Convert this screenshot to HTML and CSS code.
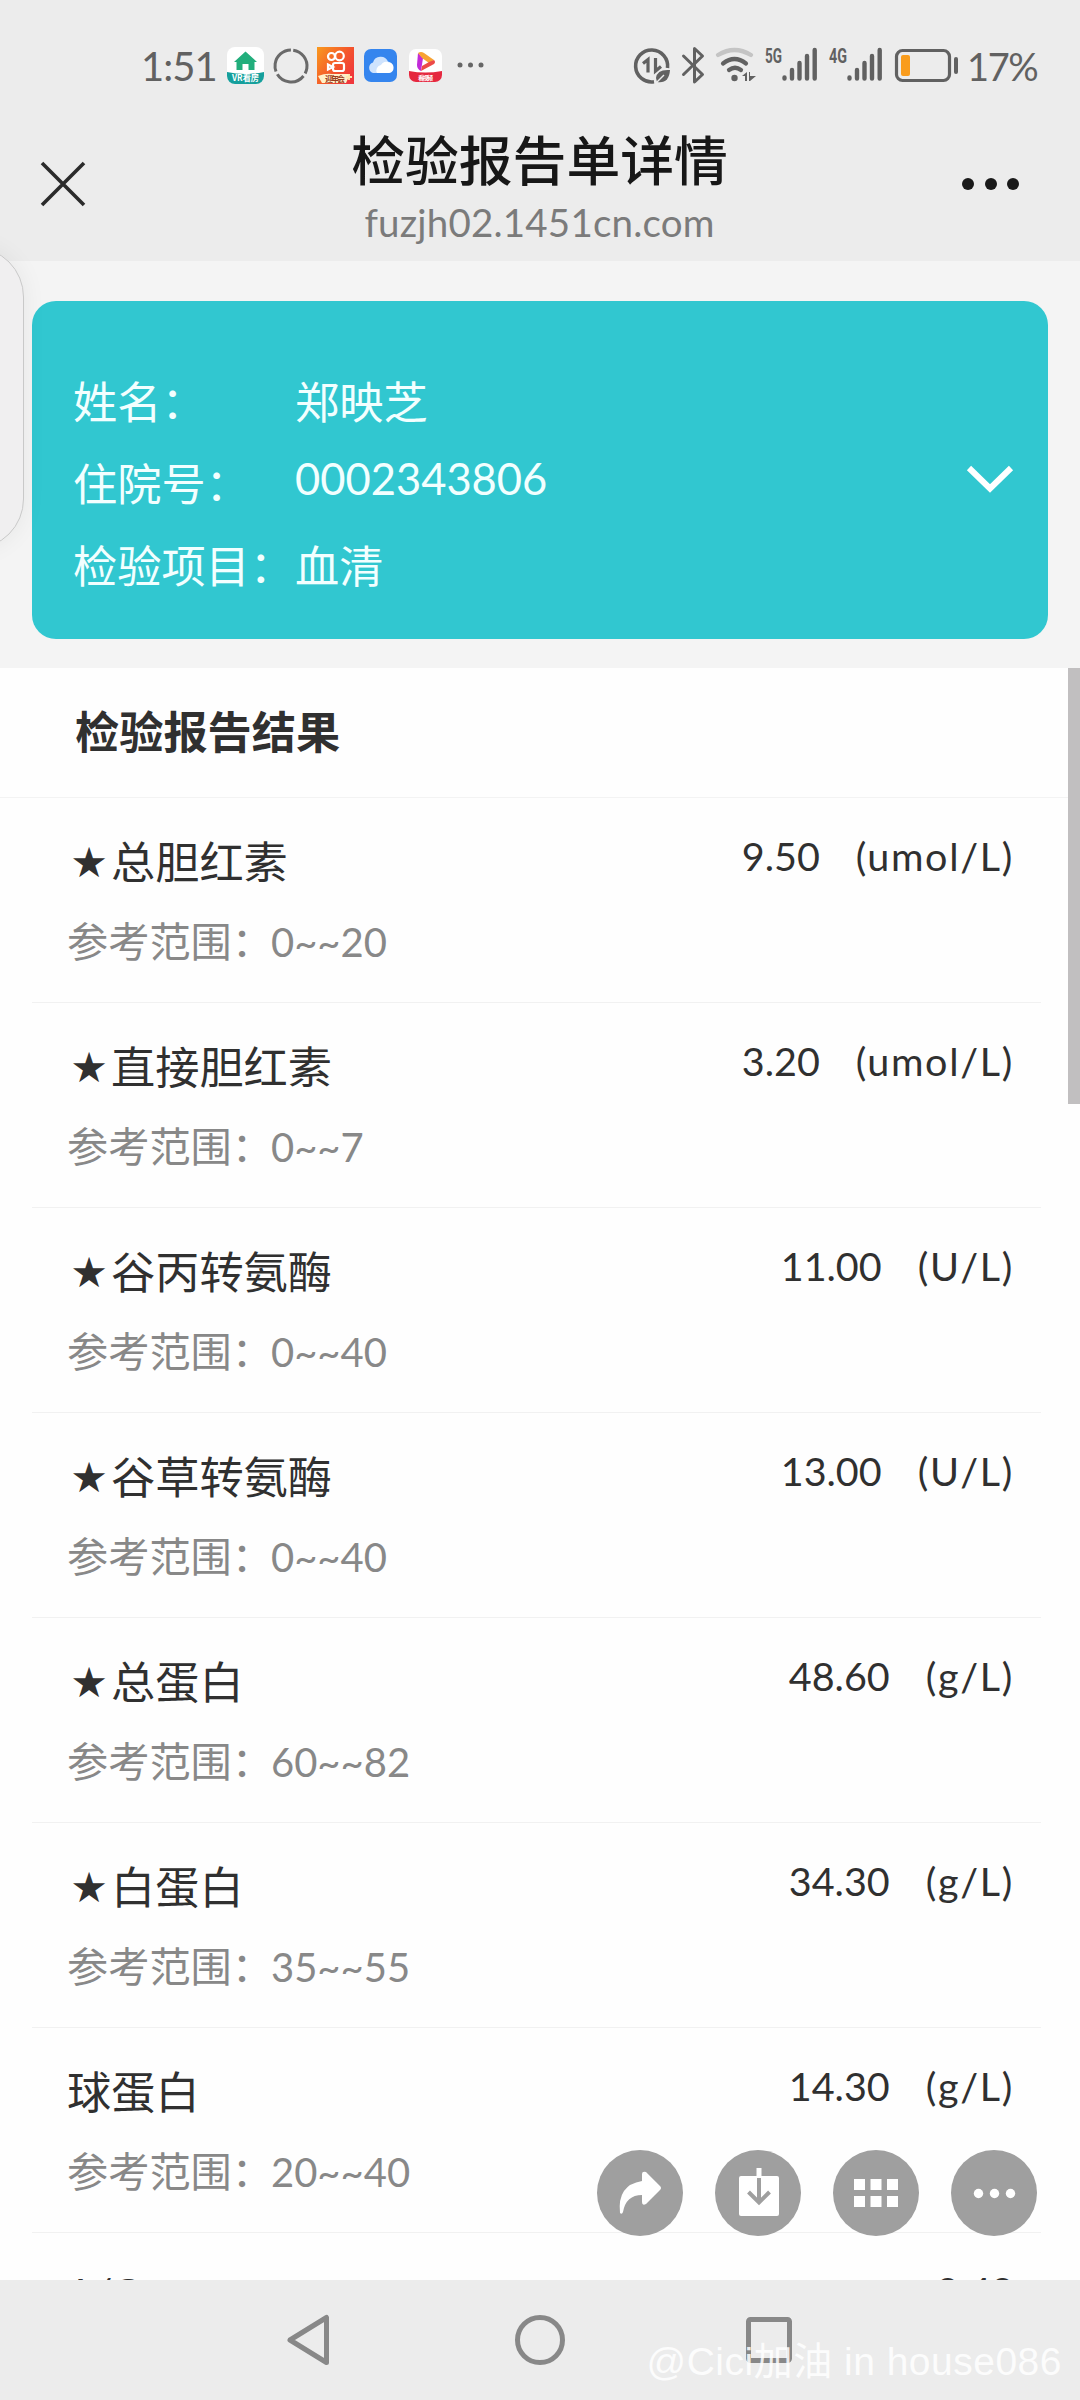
FILE: index.html
```html
<!DOCTYPE html>
<html lang="zh-CN">
<head>
    <meta charset="UTF-8">
    <meta name="viewport" content="width=device-width, initial-scale=1.0">
    <title>检验报告单详情</title>
    <link rel="stylesheet" href="styles.css">
</head>
<body>
    <div class="status-bar">
        <div class="status-left">
            <span class="clock">1:51</span>
            <svg class="app-icons" width="260" height="42" viewBox="225 45 260 42">
                <!-- house app -->
                <clipPath id="house-clip"><rect x="227" y="47" width="37" height="37" rx="8"/></clipPath>
                <g clip-path="url(#house-clip)">
                    <rect x="227" y="47" width="37" height="37" fill="#fff"/>
                    <path d="M227 72q18 4 37 0v12h-37z" fill="#159f9c"/>
                    <path d="M234 62l11.500-10.500L257 62h-2.500v8h-6v-6h-6v6h-6v-8z" fill="#22ae7c"/>
                    <text x="245.500" y="81" class="tiny" textLength="27" lengthAdjust="spacingAndGlyphs">VR看房</text>
                </g>
                <!-- broken ring -->
                <circle cx="291" cy="66" r="16" fill="none" stroke="#6a6a6a" stroke-width="3" stroke-dasharray="30.500 3" transform="rotate(-82 291 66)"/>
                <!-- short video app -->
                <linearGradient id="video-bg" x1="0" y1="0" x2="1" y2="0.700"><stop offset="0" stop-color="#f99a1e"/><stop offset="0.600" stop-color="#f4572b"/><stop offset="1" stop-color="#f0383c"/></linearGradient>
                <rect x="317" y="47" width="37" height="37" fill="url(#video-bg)"/>
                <g fill="none" stroke="#fff" stroke-width="2.200">
                    <circle cx="331.500" cy="56.500" r="3.500"/>
                    <circle cx="339.500" cy="56" r="4.300"/>
                    <rect x="333" y="63" width="11" height="8" rx="2"/>
                    <path d="M333 67l-5-2.500v5z"/>
                </g>
                <path d="M318 76q8-3 14-2h18l-4 9h-24z" fill="#fff0c8"/>
                <text x="335" y="82" class="tiny tiny-brown" textLength="20">迎年会</text>
                <path d="M349 74v6M346 77h6" stroke="#ffe9b0" stroke-width="1.800"/>
                <!-- cloud -->
                <rect x="364" y="49" width="33" height="33" rx="7" fill="#3585ee"/>
                <path d="M373 73a5.500 5.500 0 0 1 0-10.500a8 8 0 0 1 15-1a6 6 0 0 1 1 11.500z" fill="#cfe3fd"/>
                <path d="M377 73a5.500 5.500 0 0 1 4-8a5.500 5.500 0 0 1 8-2.500a5.300 5.300 0 0 1 0 10.500z" fill="#fff"/>
                <!-- player -->
                <clipPath id="player-clip"><rect x="409" y="49" width="33" height="33" rx="7"/></clipPath>
                <g clip-path="url(#player-clip)">
                    <rect x="409" y="49" width="33" height="33" fill="#fff"/>
                    <path d="M409 71q16 3 33 0v11h-33z" fill="#e5283f"/>
                    <path d="M418 53l5 5-2 13q-4-2-4-6z" fill="#c12bd8"/>
                    <path d="M418 53q3-2 6 0l10 7-5 3-7-5z" fill="#f8a233"/>
                    <path d="M434 60q2 2 0 4l-13 7 1-5 7-4z" fill="#ec4a48"/>
                    <text x="425.500" y="79.500" class="tiny tiny-small" textLength="15">看视频</text>
                </g>
                <g fill="#666"><circle cx="460" cy="65" r="2.500"/><circle cx="470.500" cy="65" r="2.500"/><circle cx="481" cy="65" r="2.500"/></g>
            </svg>
        </div>
        <div class="status-right">
            <svg width="326" height="46" viewBox="633 43 326 46">
                <!-- data saver -->
                <path d="M654 81.800A16 16 0 1 1 667.500 68" fill="none" stroke="#616161" stroke-width="3.600"/>
                <path d="M643 63.500l5-4v13M655.500 58v13l5.500-4.500" fill="none" stroke="#616161" stroke-width="3.200"/>
                <path d="M670 70q-13-1-14 8l1 4q12 2 13-12z" fill="#616161"/>
                <path d="M656 83l8-8" stroke="#ececec" stroke-width="1.500"/>
                <!-- bluetooth -->
                <path d="M683.500 56l19 18.500-8 7.500V48.500l8 7.500-19 18.500" fill="none" stroke="#616161" stroke-width="3" stroke-linejoin="round" stroke-linecap="round"/>
                <!-- wifi -->
                <g fill="none" stroke-width="4.200" stroke-linecap="round">
                    <path d="M718 55q16.500-10 33 0" stroke="#c4c4c4"/>
                    <path d="M723 63.500q11.500-9 23 0" stroke="#616161"/>
                    <path d="M729 70q6-4.500 12 0" stroke="#616161"/>
                </g>
                <circle cx="734.500" cy="78" r="3.200" fill="#616161"/>
                <path d="M742 76l5-4v9h-2v-5zM749 72l1 0v4h6l-6 5h-1z" fill="#616161"/>
                <!-- mobile signal -->
                <text x="765" y="62.500" class="net" textLength="17" lengthAdjust="spacingAndGlyphs">5G</text>
                <path d="M784.500 77.500v1M792 70v8.500M799.500 63v15.500M807 56v22.500M814.700 50v28.500" class="bars"/>
                <text x="829" y="62.500" class="net" textLength="18" lengthAdjust="spacingAndGlyphs">4G</text>
                <path d="M849.500 77.500v1M857 70v8.500M864.500 63v15.500M872 56v22.500M879.700 50v28.500" class="bars"/>
                <!-- battery -->
                <rect x="896.500" y="50.500" width="53" height="30" rx="6" fill="none" stroke="#616161" stroke-width="3.200"/>
                <rect x="901" y="55" width="9" height="21" rx="2" fill="#f99c1c"/>
                <rect x="954" y="57" width="4" height="17" rx="2" fill="#616161"/>
            </svg>
            <span class="percent">17%</span>
        </div>
    </div>

    <div class="title-bar">
        <svg width="46" height="46" viewBox="0 0 46 46"><path d="M2 2l42 42M44 2L2 44" stroke="#2b2b2b" stroke-width="3.600"/></svg>
        <div class="title-text">
            <h1>检验报告单详情</h1>
            <p>fuzjh02.1451cn.com</p>
        </div>
        <svg width="58" height="14" viewBox="0 0 58 14" fill="#1a1a1a"><circle cx="6" cy="7" r="6"/><circle cx="29" cy="7" r="6"/><circle cx="51" cy="7" r="6"/></svg>
    </div>

    <div class="page">
        <div class="card">
            <dl class="patient">
                <dt>姓名：</dt><dd>郑映芝</dd>
                <dt>住院号：</dt><dd class="digits">0002343806</dd>
                <dt>检验项目：</dt><dd>血清</dd>
            </dl>
            <svg width="48" height="30" viewBox="0 0 48 30"><path d="M3 3l21 20.500L45 3" fill="none" stroke="#fff" stroke-width="6"/></svg>
        </div>

        <div class="results">
            <h2>检验报告结果</h2>
            <ul>
                <li><div class="item"><p class="name"><i>★</i>总胆红素</p><p class="range">参考范围：<span>0~~20</span></p></div><p class="value">9.50<span>(umol/L)</span></p></li>
                <li><div class="item"><p class="name"><i>★</i>直接胆红素</p><p class="range">参考范围：<span>0~~7</span></p></div><p class="value">3.20<span>(umol/L)</span></p></li>
                <li><div class="item"><p class="name"><i>★</i>谷丙转氨酶</p><p class="range">参考范围：<span>0~~40</span></p></div><p class="value">11.00<span>(U/L)</span></p></li>
                <li><div class="item"><p class="name"><i>★</i>谷草转氨酶</p><p class="range">参考范围：<span>0~~40</span></p></div><p class="value">13.00<span>(U/L)</span></p></li>
                <li><div class="item"><p class="name"><i>★</i>总蛋白</p><p class="range">参考范围：<span>60~~82</span></p></div><p class="value">48.60<span>(g/L)</span></p></li>
                <li><div class="item"><p class="name"><i>★</i>白蛋白</p><p class="range">参考范围：<span>35~~55</span></p></div><p class="value">34.30<span>(g/L)</span></p></li>
                <li><div class="item"><p class="name">球蛋白</p><p class="range">参考范围：<span>20~~40</span></p></div><p class="value">14.30<span>(g/L)</span></p></li>
                <li><div class="item"><p class="name latin">A/G</p></div><p class="value">2.40</p></li>
            </ul>
            <div class="scrollbar"></div>
        </div>
    </div>

    <div class="side-handle"></div>

    <div class="actions">
        <button><svg width="86" height="86" viewBox="0 0 86 86"><path d="M45 24q0-3 4-2l14 14q2 2 0 4L49 54q-4 2-4-2v-7q-16 0-19 17q-1 3-3 1q-3-28 22-32z" fill="#fff"/></svg></button>
        <button><svg width="86" height="86" viewBox="0 0 86 86"><rect x="24" y="26" width="40" height="40" rx="2" fill="#fff"/><path d="M44 18v10" stroke="#fff" stroke-width="5"/><path d="M44 28v24M33.500 42L44 52.500 54.500 42" fill="none" stroke="#9f9f9f" stroke-width="4"/></svg></button>
        <button><svg width="86" height="86" viewBox="0 0 86 86" fill="#fff"><path d="M21 29h11v11h-11zM37.500 29h11v11h-11zM54 29h11v11h-11zM21 46h11v11h-11zM37.500 46h11v11h-11zM54 46h11v11h-11z"/></svg></button>
        <button><svg width="86" height="86" viewBox="0 0 86 86" fill="#fff"><circle cx="27.500" cy="43.500" r="4.700"/><circle cx="43.500" cy="43.500" r="4.700"/><circle cx="59.500" cy="43.500" r="4.700"/></svg></button>
    </div>

    <div class="nav-bar">
        <svg width="50" height="54" viewBox="0 0 50 54"><path d="M41.500 4.500v45L5 27z"/></svg>
        <svg width="54" height="54" viewBox="0 0 54 54"><circle cx="27" cy="27" r="22.500"/></svg>
        <svg width="50" height="54" viewBox="0 0 50 54"><rect x="3.500" y="6.500" width="41" height="41" rx="2"/></svg>
        <span class="watermark">@Cici加油 in house086</span>
    </div>
</body>
</html>
```
FILE: styles.css
```css
* {
    box-sizing: border-box;
    margin: 0;
    padding: 0;
}

body {
    position: relative;
    width: 1080px;
    height: 2400px;
    overflow: hidden;
    display: flex;
    flex-direction: column;
    background: #f4f4f4;
    color: #303030;
    font-family: "Noto Sans CJK SC", "Noto Sans", sans-serif;
}

svg {
    display: block;
    flex: none;
}

/* status bar */
.status-bar {
    height: 102px;
    padding: 30px 43px 0 141px;
    display: flex;
    justify-content: space-between;
    align-items: flex-start;
    background: #ececec;
    color: #616161;
}

.status-left, .status-right {
    display: flex;
    align-items: center;
    height: 72px;
}

.clock, .percent {
    font-family: Lato, sans-serif;
    font-size: 40px;
    line-height: 72px;
    white-space: nowrap;
}

.clock {
    width: 84px;
    letter-spacing: -1px;
}

.percent {
    width: 70px;
    margin-left: 8px;
    font-size: 38px;
    letter-spacing: -1.4px;
}

.tiny {
    font-size: 9px;
    font-weight: 700;
    text-anchor: middle;
    fill: #fff;
}

.tiny-brown { font-size: 8px; fill: #9b3c1c; }
.tiny-small { font-size: 6px; }

.net {
    font-family: Roboto, sans-serif;
    font-size: 20px;
    font-weight: 700;
    fill: #616161;
}

.bars {
    stroke: #616161;
    stroke-width: 4.4px;
    stroke-linecap: round;
}

/* title bar */
.title-bar {
    height: 159px;
    padding: 0 60px 0 40px;
    display: flex;
    justify-content: space-between;
    background: #ececec;
}

.title-bar > svg:first-child { margin-top: 59px; }
.title-bar > svg:last-child { margin-top: 75px; }

.title-text {
    margin-left: 31px;
    text-align: center;
    white-space: nowrap;
}

h1 {
    margin-top: 22px;
    color: #171717;
    font-size: 53.8px;
    line-height: 68px;
    font-weight: 500;
}

.title-text p {
    margin-top: 8px;
    color: #7b7b7b;
    font-family: Lato, sans-serif;
    font-size: 38.5px;
    line-height: 44px;
    letter-spacing: 0.2px;
}

/* report */
.page {
    flex: 1;
    min-height: 0;
    overflow: hidden;
    padding-top: 40px;
}

.card {
    height: 338px;
    margin: 0 32px 29px;
    padding: 58px 34px 0 41px;
    display: flex;
    justify-content: space-between;
    border-radius: 24px;
    background: #31c7d0;
    color: #f2ffff;
}

.card svg { margin-top: 106px; }

.patient {
    display: grid;
    grid-template-columns: 222px auto;
    grid-auto-rows: 82px;
    font-size: 44.2px;
    line-height: 82px;
    white-space: nowrap;
}

.digits {
    font-family: Lato, sans-serif;
    line-height: 74px;
    font-size: 43.5px;
}

.results {
    position: relative;
    background: #fefefe;
}

h2 {
    height: 130px;
    padding-left: 75px;
    border-bottom: 1px solid #f3f3f3;
    font-size: 44.2px;
    line-height: 125px;
    font-weight: 700;
}

ul {
    margin: 0 39px 0 32px;
    list-style: none;
}

li {
    height: 205px;
    padding: 0 27px 0 35px;
    display: flex;
    justify-content: space-between;
    border-bottom: 1px solid #f1f1f1;
    white-space: nowrap;
}

.name {
    margin-top: 29px;
    font-size: 44.2px;
    line-height: 66px;
}

.latin {
    margin-top: 27px;
    font-family: Lato, sans-serif;
    font-size: 40px;
}

.name i {
    display: inline-block;
    width: 44px;
    font-family: "DejaVu Sans", sans-serif;
    font-size: 42px;
    line-height: 40px;
    font-style: normal;
    text-align: center;
    vertical-align: 2px;
}

.range {
    margin-top: 15px;
    color: #888;
    font-size: 41.2px;
    line-height: 62px;
}

.range span {
    margin-left: -2px;
    font-family: Lato, sans-serif;
    font-size: 40px;
}

.value {
    margin-top: 28px;
    font-family: Lato, sans-serif;
    font-size: 39.5px;
    line-height: 60px;
}

.value span {
    margin-left: 36px;
    letter-spacing: 1.7px;
}

.scrollbar {
    position: absolute;
    top: 0;
    right: 0;
    width: 12px;
    height: 436px;
    background: #c1bfc0;
}

/* edge handle peeking in from the left */
.side-handle {
    position: absolute;
    top: 247px;
    left: -77px;
    width: 101px;
    height: 302px;
    border: 1px solid #c9c9c9;
    border-radius: 50px;
    background: #f0eff0;
    box-shadow: 0 0 24px rgba(0, 0, 0, 0.06);
}

.actions {
    position: absolute;
    right: 43px;
    bottom: 164px;
    display: flex;
    gap: 32px;
}

.actions button {
    width: 86px;
    height: 86px;
    border: 0;
    border-radius: 50%;
    background: #9f9f9f;
}

/* system navigation */
.nav-bar {
    position: relative;
    height: 120px;
    display: flex;
    justify-content: center;
    align-items: center;
    gap: 178px;
    background: #ececec;
}

.nav-bar svg {
    fill: none;
    stroke: #888;
    stroke-width: 5px;
    stroke-linejoin: round;
}

.watermark {
    position: absolute;
    right: 18px;
    bottom: 11px;
    color: rgba(255, 255, 255, 0.85);
    font-family: "Liberation Sans", "Noto Sans CJK SC", sans-serif;
    font-size: 39px;
    line-height: 54px;
    letter-spacing: 0.5px;
    white-space: nowrap;
}
```
